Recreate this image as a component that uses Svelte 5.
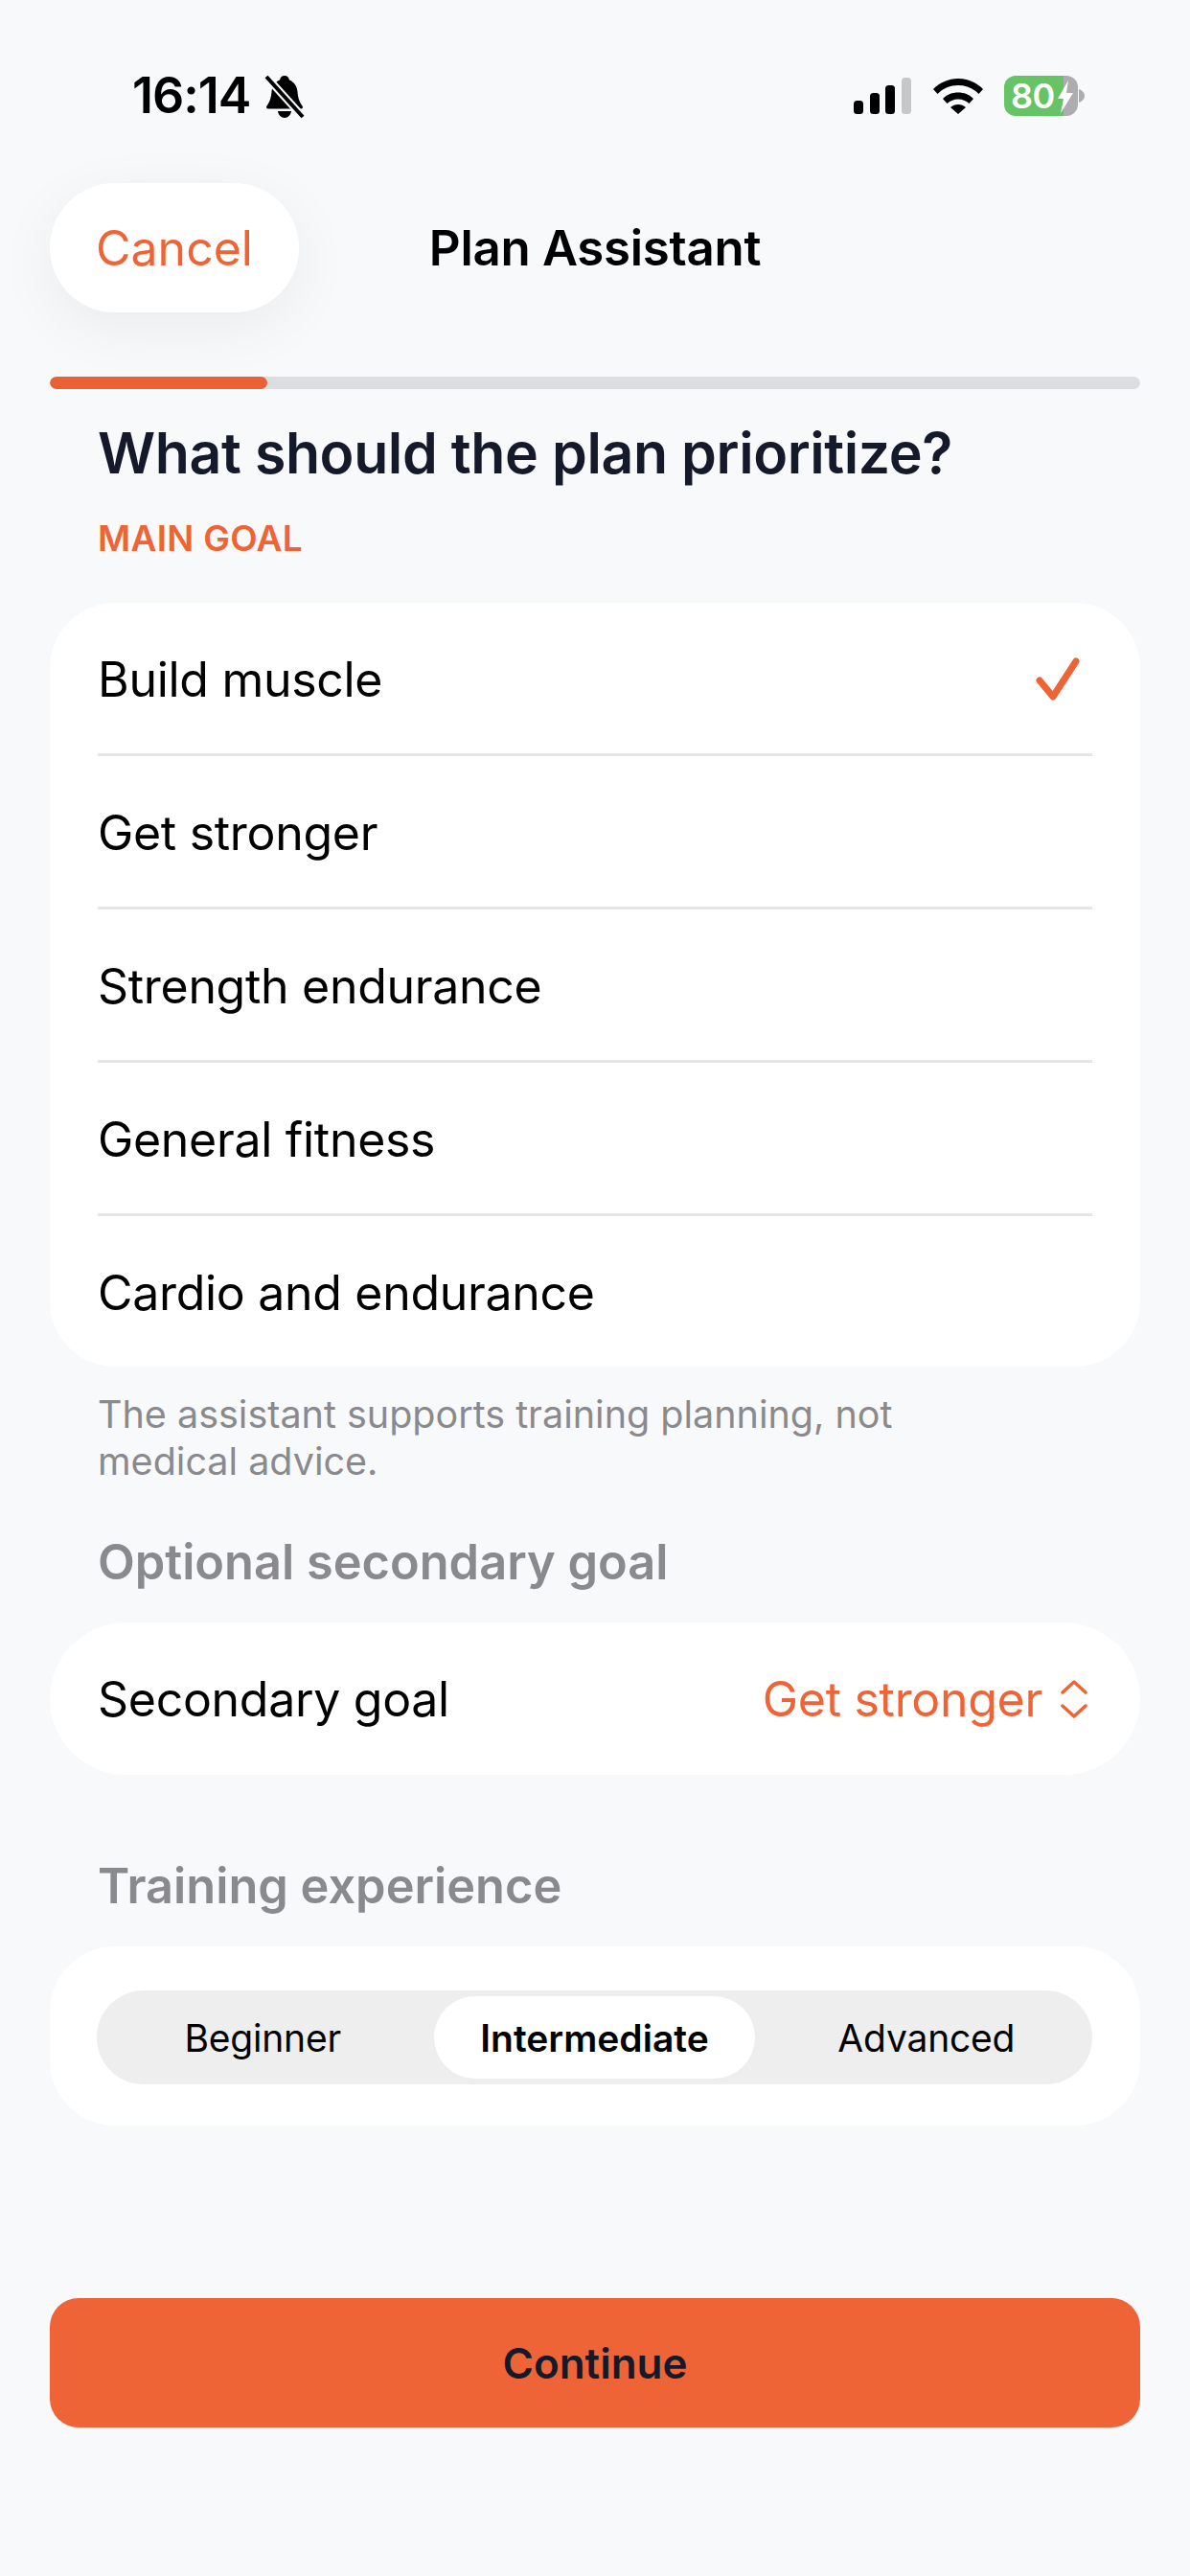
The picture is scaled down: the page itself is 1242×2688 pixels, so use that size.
<script>
  const goals = ['Build muscle', 'Get stronger', 'Strength endurance', 'General fitness', 'Cardio and endurance'];
  const levels = ['Beginner', 'Intermediate', 'Advanced'];
  let goal = $state('Build muscle');
  let level = $state('Intermediate');
</script>

<div class="screen">
  <header class="status">
    <div class="status-left">
      <span class="time">16:14</span>
      <svg class="bell" width="44" height="46" viewBox="0 0 44 46">
        <path d="M22 1c3 0 4.500 2 5 4.500 5 2 8 6.500 8.500 12 .5 6 1.500 10 5 15 1 1.500 .5 3-1.500 3H5c-2 0-2.500-1.500-1.500-3 3.500-5 4.500-9 5-15 .5-5.500 3.500-10 8.500-12C17.500 3 19 1 22 1z" fill="#000"/>
        <path d="M15 38h14c-.5 4-3.500 7-7 7s-6.500-3-7-7z" fill="#000"/>
        <path d="M3 2l38 42" stroke="#f8f9fb" stroke-width="8"/>
        <path d="M3 2l38 42" stroke="#000" stroke-width="4"/>
      </svg>
    </div>
    <div class="status-right">
      <svg width="60" height="38" viewBox="0 0 60 38">
        <rect x="0" y="24" width="10" height="14" rx="3.500" fill="#000"/>
        <rect x="17" y="16" width="10" height="22" rx="3.500" fill="#000"/>
        <rect x="33" y="8" width="10" height="30" rx="3.500" fill="#000"/>
        <rect x="50" y="0" width="10" height="38" rx="3.500" fill="#c6c7c9"/>
      </svg>
      <svg class="wifi" width="52" height="38" viewBox="0 0 52 38">
        <path d="M0 12C7 5 16 1 26 1s19 4 26 11l-4.500 5C41.500 11 34 8 26 8S10.500 11 4.500 17z" fill="#000"/>
        <path d="M10 22c4.500-4.500 10-6.500 16-6.500s11.500 2 16 6.500l-4.500 5c-3.500-3-7-4.500-11.500-4.500S18 24 14.500 27z" fill="#000"/>
        <path d="M18 31c2.500-2 5-3 8-3s5.500 1 8 3l-8 7z" fill="#000"/>
      </svg>
      <div class="battery">
        <div class="battery-body">
          <span class="battery-level">80</span>
          <svg class="bolt" width="16" height="34" viewBox="0 0 16 34">
            <path d="M11 0L0 19h6l-3 15L16 13H9z" fill="#fff"/>
          </svg>
        </div>
        <svg class="nub" width="6" height="14" viewBox="0 0 6 14">
          <path d="M0 0c3 1 6 3.500 6 7s-3 6-6 7z" fill="#adadb0"/>
        </svg>
      </div>
    </div>
  </header>

  <nav class="nav">
    <button class="cancel">Cancel</button>
    <h1 class="nav-title">Plan Assistant</h1>
  </nav>

  <div class="progress"><div class="progress-fill"></div></div>

  <h2 class="question">What should the plan prioritize?</h2>
  <p class="eyebrow">MAIN GOAL</p>

  <section class="card goals">
    {#each goals as g}
      <button class="goal-row" onclick={() => (goal = g)}>
        <span class="goal-inner">
          <span>{g}</span>
          {#if goal === g}
            <svg width="48" height="46" viewBox="0 0 48 46">
              <path d="M5 24l14 17L43 4" fill="none" stroke="#ee6437" stroke-width="7" stroke-linecap="round" stroke-linejoin="round"/>
            </svg>
          {/if}
        </span>
      </button>
    {/each}
  </section>

  <p class="note">The assistant supports training planning, not<br />medical advice.</p>

  <h3 class="section-label first">Optional secondary goal</h3>
  <section class="card secondary">
    <span>Secondary goal</span>
    <span class="picker">
      Get stronger
      <svg width="28" height="40" viewBox="0 0 28 40">
        <path d="M2 13L14 2l12 11M2 27l12 11 12-11" fill="none" stroke="#ee6437" stroke-width="3.500" stroke-linecap="round" stroke-linejoin="round"/>
      </svg>
    </span>
  </section>

  <h3 class="section-label second">Training experience</h3>
  <section class="card experience">
    <div class="segmented">
      {#each levels as l}
        <button class="segment" class:active={level === l} onclick={() => (level = l)}>{l}</button>
      {/each}
    </div>
  </section>

  <button class="continue">Continue</button>
</div>

<style>
  :global(body) {
    margin: 0;
    background: #f8f9fb;
  }

  .screen {
    width: 1242px;
    height: 2688px;
    box-sizing: border-box;
    padding: 0 52px;
    background: #f8f9fb;
    font-family: Inter, "Liberation Sans", sans-serif;
    color: #000;
    overflow: hidden;
  }

  button {
    font-family: inherit;
    border: none;
    padding: 0;
    color: inherit;
    cursor: pointer;
  }

  .status {
    height: 191px;
    display: flex;
    justify-content: space-between;
    padding: 78px 58px 0 86px;
    box-sizing: border-box;
  }

  .status-left {
    display: flex;
    align-items: flex-start;
    gap: 14px;
    height: 46px;
  }

  .time {
    font-size: 52px;
    line-height: 44px;
    font-weight: 600;
    letter-spacing: -1px;
  }

  .status-right {
    display: flex;
    align-items: center;
    height: 44px;
  }

  .wifi {
    margin: 0 22px 0 23px;
  }

  .battery {
    display: flex;
    align-items: center;
    gap: 1px;
  }

  .battery-body {
    width: 77px;
    height: 42px;
    border-radius: 12px;
    background: linear-gradient(90deg, #66c466 0 62px, #adadb0 62px);
    display: flex;
    align-items: center;
    padding-left: 7px;
    box-sizing: border-box;
    position: relative;
  }

  .battery-level {
    color: #fff;
    font-size: 36px;
    font-weight: 600;
    line-height: 42px;
    letter-spacing: -0.5px;
  }

  .bolt {
    position: absolute;
    left: 56px;
    top: 5px;
  }

  .nav {
    height: 135px;
    display: grid;
    grid-template-columns: 1fr auto 1fr;
    align-items: center;
  }

  .cancel {
    width: 260px;
    height: 135px;
    border-radius: 68px;
    background: #fff;
    color: #ee6437;
    font-size: 50px;
    box-shadow: 0 16px 64px rgba(0, 0, 0, 0.06);
  }

  .nav-title {
    margin: 0;
    font-size: 51px;
    font-weight: 600;
    letter-spacing: -0.3px;
  }

  .progress {
    height: 13px;
    margin-top: 67px;
    border-radius: 7px;
    background: #dcdde0;
    overflow: hidden;
  }

  .progress-fill {
    width: 227px;
    height: 100%;
    background: #e96135;
    border-radius: 7px;
  }

  .question {
    margin: 32px 0 0 50px;
    font-size: 59px;
    line-height: 70px;
    font-weight: 600;
    color: #151a2b;
    letter-spacing: -0.4px;
  }

  .eyebrow {
    margin: 33px 0 0 50px;
    font-size: 37px;
    line-height: 42px;
    font-weight: 600;
    color: #ee6437;
    letter-spacing: 0.3px;
  }

  .card {
    background: #fff;
    border-radius: 68px;
  }

  .goals {
    margin-top: 46px;
    overflow: hidden;
  }

  .goal-row {
    display: block;
    width: 100%;
    height: 160px;
    background: none;
    padding: 0 50px;
    font-size: 50px;
    letter-spacing: -0.3px;
    text-align: left;
  }

  .goal-row:last-child {
    height: 157px;
  }

  .goal-inner {
    height: 100%;
    display: flex;
    align-items: center;
    justify-content: space-between;
    box-sizing: border-box;
    border-bottom: 3px solid #e6e6e8;
    padding: 2px 12px 0 0;
  }

  .goal-row:last-child .goal-inner {
    border-bottom: none;
  }

  .note {
    margin: 26px 0 0 50px;
    font-size: 39.5px;
    line-height: 49px;
    color: #8a8a8e;
  }

  .section-label {
    margin: 0 0 0 50px;
    font-size: 50.5px;
    line-height: 64px;
    font-weight: 600;
    color: #8a8a8e;
  }

  .first {
    margin-top: 48px;
  }

  .second {
    margin-top: 84px;
  }

  .secondary {
    margin-top: 31px;
    height: 159px;
    border-radius: 80px;
    padding: 0 55px 0 50px;
    display: flex;
    align-items: center;
    justify-content: space-between;
    font-size: 50px;
    letter-spacing: -0.3px;
  }

  .picker {
    display: flex;
    align-items: center;
    gap: 19px;
    color: #ee6437;
  }

  .experience {
    margin-top: 31px;
    height: 187px;
    padding: 46px 50px 0 49px;
    box-sizing: border-box;
  }

  .segmented {
    height: 98px;
    border-radius: 49px;
    background: #eeeeef;
    display: grid;
    grid-template-columns: 1fr 1fr 1fr;
    align-items: center;
  }

  .segment {
    height: 86px;
    border-radius: 43px;
    background: none;
    font-size: 39px;
    letter-spacing: -0.2px;
  }

  .segment.active {
    margin: 0 5.5px;
    background: #fff;
    font-weight: 600;
    letter-spacing: 0;
  }

  .continue {
    display: block;
    width: 100%;
    height: 135px;
    margin-top: 180px;
    border-radius: 30px;
    background: #ee6437;
    color: #151a2b;
    font-size: 44px;
    font-weight: 600;
  }
</style>
